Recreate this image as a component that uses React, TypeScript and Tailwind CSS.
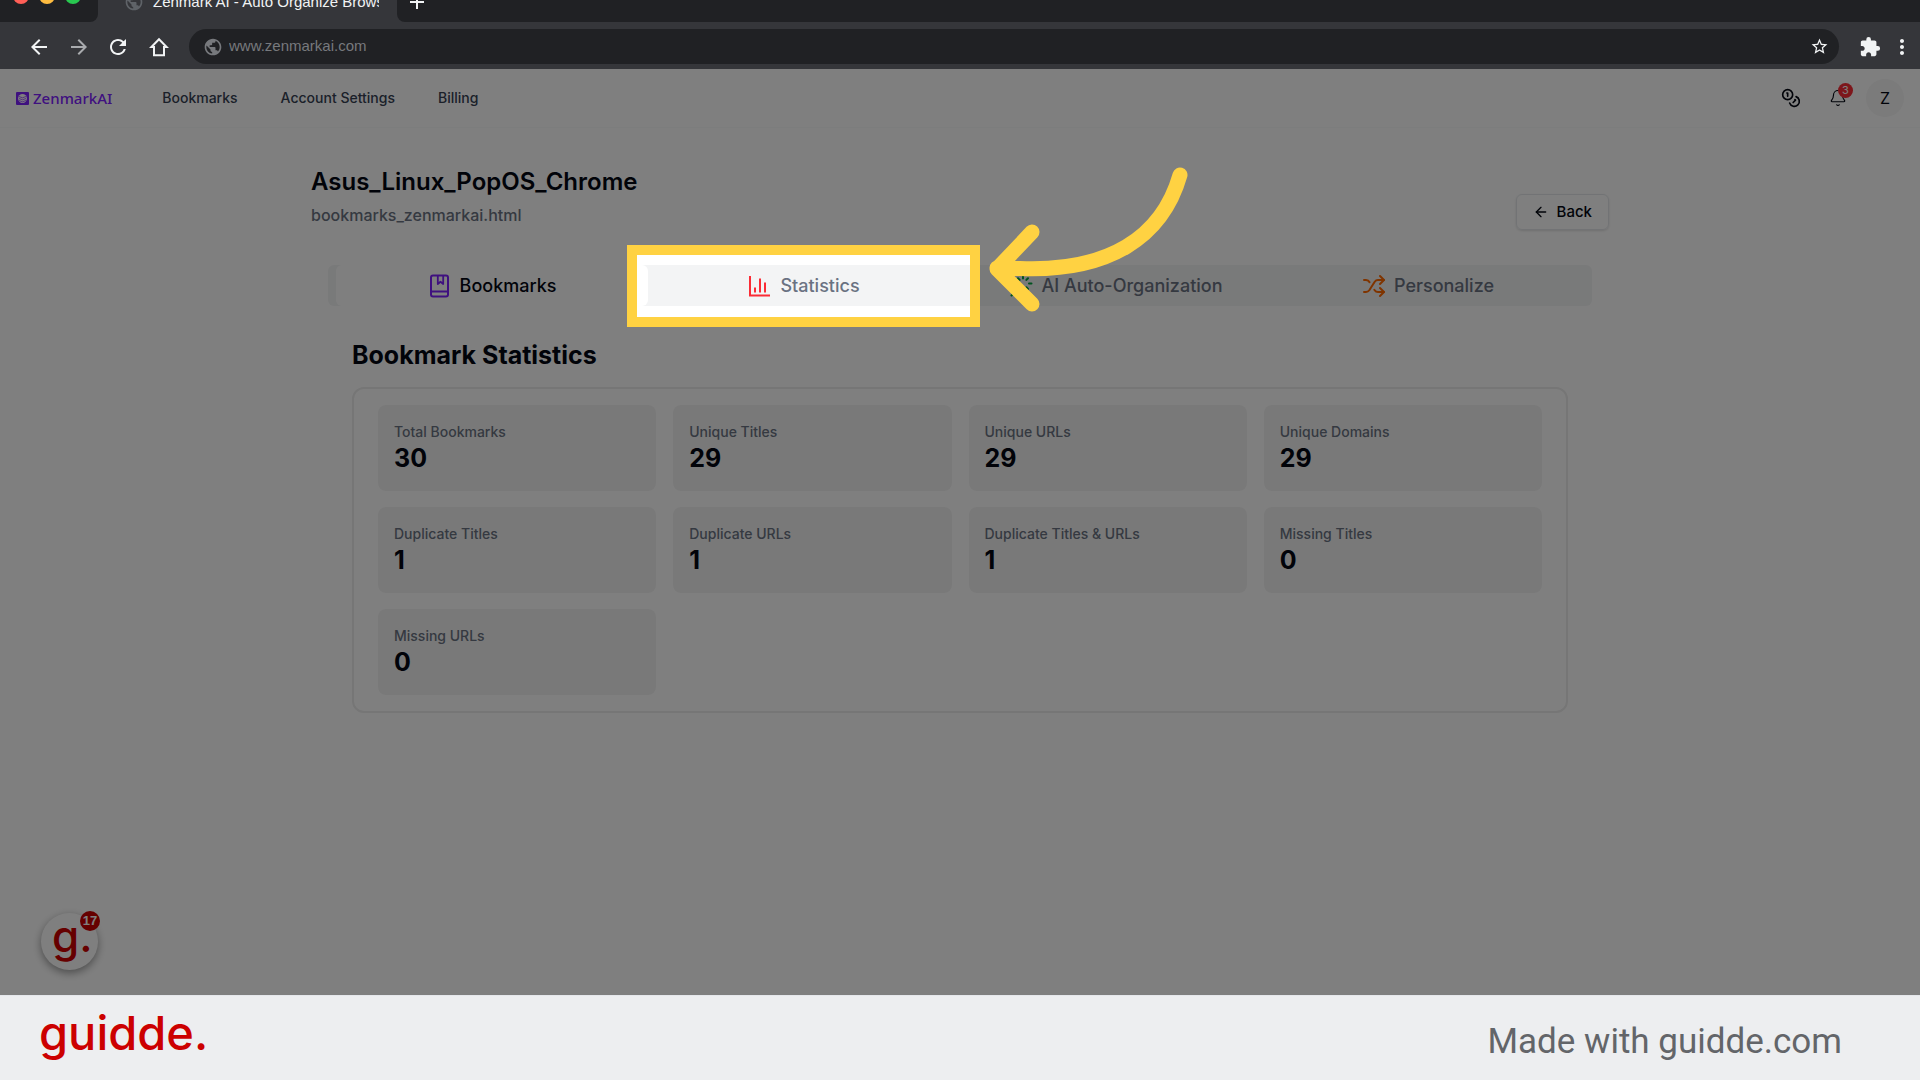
import { ArrowLeft, Bell, Coins, Shuffle } from "lucide-react";
import { MdArrowBack, MdArrowForward, MdExtension, MdMoreVert, MdPublic, MdRefresh, MdStarBorder } from "react-icons/md";

const navItems = ["Bookmarks", "Account Settings", "Billing"];

const stats = [
  { label: "Total Bookmarks", value: 30 },
  { label: "Unique Titles", value: 29 },
  { label: "Unique URLs", value: 29 },
  { label: "Unique Domains", value: 29 },
  { label: "Duplicate Titles", value: 1 },
  { label: "Duplicate URLs", value: 1 },
  { label: "Duplicate Titles & URLs", value: 1 },
  { label: "Missing Titles", value: 0 },
  { label: "Missing URLs", value: 0 },
];

function HomeIcon() {
  return (
    <svg className="size-6" viewBox="0 0 24 24" fill="none" stroke="currentColor" strokeWidth="2">
      <path d="M12 4.2 4.4 12H7v8.3h10V12h2.6z" />
    </svg>
  );
}

function BookIcon() {
  return (
    <svg className="size-6 text-violet-600" viewBox="0 0 24 24" fill="none" stroke="currentColor" strokeWidth="2" strokeLinejoin="round">
      <rect x="3" y="1.500" width="17" height="21" rx="2" />
      <path d="M3.500 17.500h16" />
      <path d="M9.800 2v8l2.700-2.200 2.700 2.200V2" strokeWidth="1.8" />
    </svg>
  );
}

function ChartIcon() {
  return (
    <svg className="size-6 text-red-500" viewBox="0 0 24 24" fill="none" stroke="currentColor" strokeWidth="2">
      <path d="M2 2v19.5h20" />
      <path d="M7 18.5v-5M12 18.5V4.5M17 18.5v-10" />
    </svg>
  );
}

function WandIcon() {
  return (
    <svg className="size-6 text-green-600" viewBox="0 0 24 24" fill="none" stroke="currentColor" strokeWidth="2" strokeLinecap="round">
      <path d="M2.5 21.5 12 12" />
      <path d="M14 2v2.5M19 4.2l-1.6 1.7M22.5 9.5H20M19 15l-1.6-1.7M14 17v-2.5M9 4.2l1.6 1.7M5.5 9.5H8" />
    </svg>
  );
}

function BrowserBar() {
  return (
    <div className="relative z-20 bg-[#35363a] font-['Liberation_Sans',sans-serif] text-[#f1f3f4]">
      <div className="flex h-[22px] overflow-hidden">
        <div className="flex w-[98px] items-start gap-[10px] rounded-br-lg bg-[#202124] pl-[13px]">
          <span className="-mt-3 size-4 rounded-full bg-[#ff5f57]" />
          <span className="-mt-3 size-4 rounded-full bg-[#febc40]" />
          <span className="-mt-3 size-4 rounded-full bg-[#28c850]" />
        </div>
        <div className="-mt-2 flex w-[299px] items-start overflow-hidden pl-[26px]">
          <MdPublic className="size-5 shrink-0 text-[#5f6368]" />
          <span className="ml-[9px] w-[226px] overflow-hidden whitespace-nowrap text-[15px] leading-5">
            Zenmark AI - Auto Organize Browser
          </span>
        </div>
        <div className="flex-1 rounded-bl-lg bg-[#202124] pl-3">
          <svg className="-mt-1 size-4" viewBox="0 0 16 16" stroke="currentColor" strokeWidth="2">
            <path d="M8 0v13M1 6h14" />
          </svg>
        </div>
      </div>
      <div className="flex h-[47px] items-center pl-[27px] pr-[6px] pt-0.5">
        <button aria-label="Back"><MdArrowBack className="size-6" /></button>
        <button aria-label="Forward" className="ml-4 text-[#a9abae]"><MdArrowForward className="size-6" /></button>
        <button aria-label="Reload" className="ml-[15px]"><MdRefresh className="size-6" /></button>
        <button aria-label="Home" className="ml-[17px]"><HomeIcon /></button>
        <div className="ml-[18px] flex h-[35px] flex-1 items-center rounded-full bg-[#202124] pl-[14px] pr-[10px]">
          <MdPublic className="size-5 text-[#77797d]" />
          <input
            aria-label="Address"
            className="ml-[6px] flex-1 bg-transparent text-[15px] text-[#77797d] outline-none"
            defaultValue="www.zenmarkai.com"
          />
          <button aria-label="Add to favourites"><MdStarBorder className="size-[19px]" /></button>
        </div>
        <button aria-label="Extensions" className="ml-5"><MdExtension className="size-[22px]" /></button>
        <button aria-label="Menu" className="ml-[9px]"><MdMoreVert className="size-6" /></button>
      </div>
    </div>
  );
}

function Header() {
  return (
    <header className="flex h-[59px] items-center border-b border-gray-50 px-4">
      <a href="#" className="flex items-center gap-1 font-['Noto_Sans',sans-serif] text-[15px] font-medium text-violet-600">
        <svg className="size-[13px]" viewBox="0 0 13 13">
          <rect width="13" height="13" rx="1" fill="currentColor" />
          <ellipse cx="6.5" cy="6.5" rx="4.4" ry="4.6" fill="#fff" />
          <path d="M3 4.5l3.5 1.3L10 4.5M3 6.5l3.5 1.3L10 6.5M3 8.5l3.5 1.3L10 8.5" fill="none" stroke="currentColor" strokeWidth=".7" />
        </svg>
        ZenmarkAI
      </a>
      <nav className="ml-[50px] flex gap-[43px] text-sm font-medium text-gray-700">
        {navItems.map((item) => (
          <a key={item} href="#">{item}</a>
        ))}
      </nav>
      <div className="ml-auto flex items-center">
        <button aria-label="Credits"><Coins className="size-5" /></button>
        <button aria-label="Notifications" className="relative ml-7">
          <Bell className="size-[18px]" strokeWidth={1.5} />
          <span className="absolute -right-[6px] -top-[6px] flex size-[15px] items-center justify-center rounded-full bg-red-500 text-[11px] text-white">
            3
          </span>
        </button>
        <button className="ml-[19px] size-[38px] rounded-full bg-[#f6f6f6] text-base">Z</button>
      </div>
    </header>
  );
}

function Spotlight() {
  return (
    <>
      <div className="pointer-events-none absolute -bottom-[21px] -left-[21px] -right-5 -top-5 z-10 border-10 border-[#ffd242] shadow-[0_0_0_3000px_rgba(0,0,0,0.5)]" />
      <svg
        className="pointer-events-none absolute -top-[105px] left-[332px] z-10 h-[160px] w-[220px]"
        viewBox="0 0 220 160"
        fill="none"
        stroke="#ffd242"
        strokeWidth="15"
        strokeLinecap="round"
        strokeLinejoin="round"
      >
        <path d="M200 15C182 78 128 112 40 108.5L17 108M52 72L17 109L52 144" />
      </svg>
    </>
  );
}

function Tabs() {
  return (
    <div role="tablist" className="mx-[17px] mt-[35px] grid grid-cols-4 rounded-md bg-[#f3f4f5] px-2 text-lg font-medium text-gray-500">
      <button role="tab" className="flex h-[41px] items-center justify-center gap-2 rounded-md bg-white text-gray-950">
        <BookIcon />
        Bookmarks
      </button>
      <div className="relative flex">
        <button role="tab" className="flex h-[41px] flex-1 items-center justify-center gap-2">
          <ChartIcon />
          Statistics
        </button>
        <Spotlight />
      </div>
      <button role="tab" className="flex h-[41px] items-center justify-center gap-2">
        <WandIcon />
        AI Auto-Organization
      </button>
      <button role="tab" className="flex h-[41px] items-center justify-center gap-2">
        <Shuffle className="size-6 text-orange-500" />
        Personalize
      </button>
    </div>
  );
}

function Statistics() {
  return (
    <section className="mx-[41px] mt-[31px]">
      <h2 className="text-[25px] font-bold leading-9">Bookmark Statistics</h2>
      <dl className="mt-[14px] grid grid-cols-4 gap-x-[17px] gap-y-4 rounded-xl border-2 border-[#ececec] px-6 py-4">
        {stats.map((stat) => (
          <div key={stat.label} className="h-[86px] rounded-lg bg-[#f3f3f3] px-4 pt-[17px]">
            <dt className="text-sm font-medium leading-5 text-gray-500">{stat.label}</dt>
            <dd className="text-[25px] font-bold leading-8">{stat.value}</dd>
          </div>
        ))}
      </dl>
    </section>
  );
}

export default function App() {
  return (
    <div className="flex min-h-screen flex-col bg-white font-['Inter',sans-serif] text-gray-950">
      <BrowserBar />
      <div className="relative flex-1 overflow-hidden">
        <Header />
        <main className="mx-auto max-w-[1298px] pt-9">
          <div className="flex items-start">
            <div>
              <h1 className="text-2xl font-semibold leading-9">Asus_Linux_PopOS_Chrome</h1>
              <p className="mt-0.5 text-base font-medium leading-[26px] text-gray-500">bookmarks_zenmarkai.html</p>
            </div>
            <button className="ml-auto mt-[30px] flex h-9 items-center gap-2 rounded-md border border-gray-200 px-4 text-[15px] font-medium shadow-sm">
              <ArrowLeft className="size-4" />
              Back
            </button>
          </div>
          <Tabs />
          <Statistics />
        </main>
        <button
          aria-label="Open guide, 17 steps"
          className="absolute bottom-[25px] left-[41px] flex size-[57px] items-start rounded-full bg-white pl-[11px] text-[#cc0000] shadow-[0_3px_8px_rgba(0,0,0,0.4)]"
        >
          <span className="text-[44px] font-medium leading-[46px]">g.</span>
          <span className="absolute -right-[2px] -top-[2px] flex size-5 items-center justify-center rounded-full bg-[#cc0000] font-['Liberation_Sans',sans-serif] text-[13px] font-bold text-white">
            17
          </span>
        </button>
      </div>
      <footer className="relative z-20 flex h-[85px] items-center justify-between border-t border-gray-200 bg-[#edeef0] pl-[39px] pr-[78px]">
        <a href="#" className="pb-[10px] text-[47px] font-medium text-[#cc0000]">guidde.</a>
        <a href="#" className="pt-2 font-['Roboto',sans-serif] text-[35px] text-[#636569]">Made with guidde.com</a>
      </footer>
    </div>
  );
}
